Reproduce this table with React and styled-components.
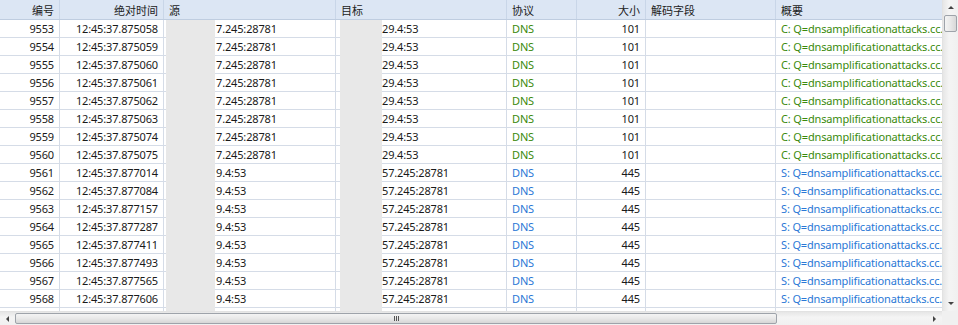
import React from 'react';
import styled, { createGlobalStyle } from 'styled-components';

const GlobalStyle = createGlobalStyle`
  html, body {
    margin: 0;
    padding: 0;
    background: #ffffff;
  }
  body {
    font-family: "Noto Sans", "Noto Sans CJK SC", sans-serif;
  }
`;

// indent: room left for the masked part of an address
const columns = [
  { key: 'no', title: '编号', width: 60, align: 'right' },
  { key: 'time', title: '绝对时间', width: 104, align: 'right' },
  { key: 'src', title: '源', width: 172, align: 'left', indent: 52 },
  { key: 'dst', title: '目标', width: 171, align: 'left', indent: 46 },
  { key: 'proto', title: '协议', width: 70, align: 'left' },
  { key: 'size', title: '大小', width: 69, align: 'right' },
  { key: 'field', title: '解码字段', width: 130, align: 'left' },
  { key: 'summary', title: '概要', width: 200, align: 'left' },
];

const times = [
  '875058', '875059', '875060', '875061', '875062', '875063', '875074', '875075',
  '877014', '877084', '877157', '877287', '877411', '877493', '877565', '877606',
];

const rows = times.map((t, i) => {
  const client = i < 8;
  return {
    no: String(9553 + i),
    time: '12:45:37.' + t,
    src: client ? '7.245:28781' : '9.4:53',
    dst: client ? '29.4:53' : '57.245:28781',
    proto: 'DNS',
    size: client ? '101' : '445',
    field: '',
    summary: (client ? 'C' : 'S') + ': Q=dnsamplificationattacks.cc.' + (client ? '' : 'net'),
    kind: client ? 'client' : 'server',
  };
});

const template = columns.map((c) => c.width + 'px').join(' ');

export default function App() {
  return (
    <>
      <GlobalStyle />
      <Frame>
        <TableArea>
          <Header>
            {columns.map((c) => (
              <HeadCell key={c.key} $align={c.align}>{c.title}</HeadCell>
            ))}
          </Header>
          {rows.map((r) => (
            <Row key={r.no}>
              {columns.map((c) => (
                <Cell
                  key={c.key}
                  $align={c.align}
                  $indent={c.indent}
                  $tone={c.key === 'proto' || c.key === 'summary' ? r.kind : null}
                >
                  {r[c.key]}
                </Cell>
              ))}
            </Row>
          ))}
          <Row>
            {columns.map((c) => <Cell key={c.key} />)}
          </Row>
          <Redact $left={166} $width={49} />
          <Redact $left={340} $width={42} />
        </TableArea>
        <VScroll>
          <ArrowBox>
            <Arrow $dir="up" />
          </ArrowBox>
          <VThumb />
          <VTrack />
          <ArrowBox>
            <Arrow $dir="down" />
          </ArrowBox>
        </VScroll>
        <HScroll>
          <HArrowBox>
            <Arrow $dir="left" />
          </HArrowBox>
          <HThumb>
            <Grip>
              <i /><i /><i />
            </Grip>
          </HThumb>
          <HTrack />
          <HArrowBox>
            <Arrow $dir="right" />
          </HArrowBox>
        </HScroll>
        <Corner />
      </Frame>
    </>
  );
}

const Frame = styled.div`
  width: 958px;
  height: 325px;
  overflow: hidden;
  display: grid;
  grid-template-columns: 942px 16px;
  grid-template-rows: 311px 14px;
  background: #fff;
`;

const TableArea = styled.div`
  position: relative;
  overflow: hidden;
  font-size: 11px;
  letter-spacing: -0.15px;
  color: #1a1a1a;
`;

const Header = styled.div`
  display: grid;
  grid-template-columns: ${template};
  height: 20px;
  background: #dce6f4;
  border-bottom: 1px solid #bfcde0;
  box-sizing: border-box;
`;

const HeadCell = styled.div`
  display: flex;
  align-items: center;
  justify-content: ${(p) => (p.$align === 'right' ? 'flex-end' : 'flex-start')};
  padding: 0 5px;
  border-right: 1px solid #c9d6e8;
  white-space: nowrap;
  overflow: hidden;
  color: #222;
  letter-spacing: 0;
`;

const Row = styled.div`
  display: grid;
  grid-template-columns: ${template};
  height: 18px;
  border-bottom: 1px solid #d5dce7;
  box-sizing: border-box;
`;

const toneColor = {
  client: '#3a8a0c',
  server: '#2a78d6',
};

const Cell = styled.div`
  display: flex;
  align-items: center;
  justify-content: ${(p) => (p.$align === 'right' ? 'flex-end' : 'flex-start')};
  padding: 0 5px 0 ${(p) => p.$indent || 5}px;
  border-right: 1px solid #d5dce7;
  white-space: nowrap;
  overflow: hidden;
  color: ${(p) => (p.$tone ? toneColor[p.$tone] : '#1a1a1a')};
`;

const Redact = styled.div`
  position: absolute;
  top: 20px;
  bottom: -6px;
  left: ${(p) => p.$left}px;
  width: ${(p) => p.$width}px;
  background: #e8e8e8;
`;

const VScroll = styled.div`
  display: flex;
  flex-direction: column;
  background: linear-gradient(to right, #e6e6e6, #f4f4f4 40%, #f0f0f0);
  border-left: 1px solid #e2e2e2;
  box-sizing: border-box;
`;

const ArrowBox = styled.div`
  height: 15px;
  display: flex;
  align-items: center;
  justify-content: center;
  flex-shrink: 0;
`;

const arrowShape = {
  up: 'border-left: 3px solid transparent; border-right: 3px solid transparent; border-bottom: 3px solid #444;',
  down: 'border-left: 3px solid transparent; border-right: 3px solid transparent; border-top: 3px solid #444;',
  left: 'border-top: 3px solid transparent; border-bottom: 3px solid transparent; border-right: 3px solid #444;',
  right: 'border-top: 3px solid transparent; border-bottom: 3px solid transparent; border-left: 3px solid #444;',
};

const Arrow = styled.span`
  width: 0;
  height: 0;
  ${(p) => arrowShape[p.$dir]}
`;

const VThumb = styled.div`
  height: 17px;
  margin: 0 1px;
  border: 1px solid #9ea3aa;
  border-radius: 2px;
  background: linear-gradient(to right, #f4f4f4, #e8e8e8 50%, #d8d8d8);
  box-sizing: border-box;
  flex-shrink: 0;
`;

const VTrack = styled.div`
  flex: 1;
`;

const HScroll = styled.div`
  display: flex;
  background: linear-gradient(to bottom, #e6e6e6, #f4f4f4 40%, #f0f0f0);
  border-top: 1px solid #e2e2e2;
  box-sizing: border-box;
`;

const HArrowBox = styled.div`
  width: 15px;
  display: flex;
  align-items: center;
  justify-content: center;
  flex-shrink: 0;
`;

const HThumb = styled.div`
  width: 762px;
  margin: 1px 0;
  border: 1px solid #9ea3aa;
  border-radius: 2px;
  background: linear-gradient(to bottom, #f4f4f4, #e8e8e8 50%, #d6d6d6);
  box-sizing: border-box;
  display: flex;
  align-items: center;
  justify-content: center;
  flex-shrink: 0;
`;

const Grip = styled.div`
  display: flex;
  gap: 1px;
  i {
    width: 1px;
    height: 5px;
    background: #555;
  }
`;

const HTrack = styled.div`
  flex: 1;
`;

const Corner = styled.div`
  background: #f0f0f0;
`;
